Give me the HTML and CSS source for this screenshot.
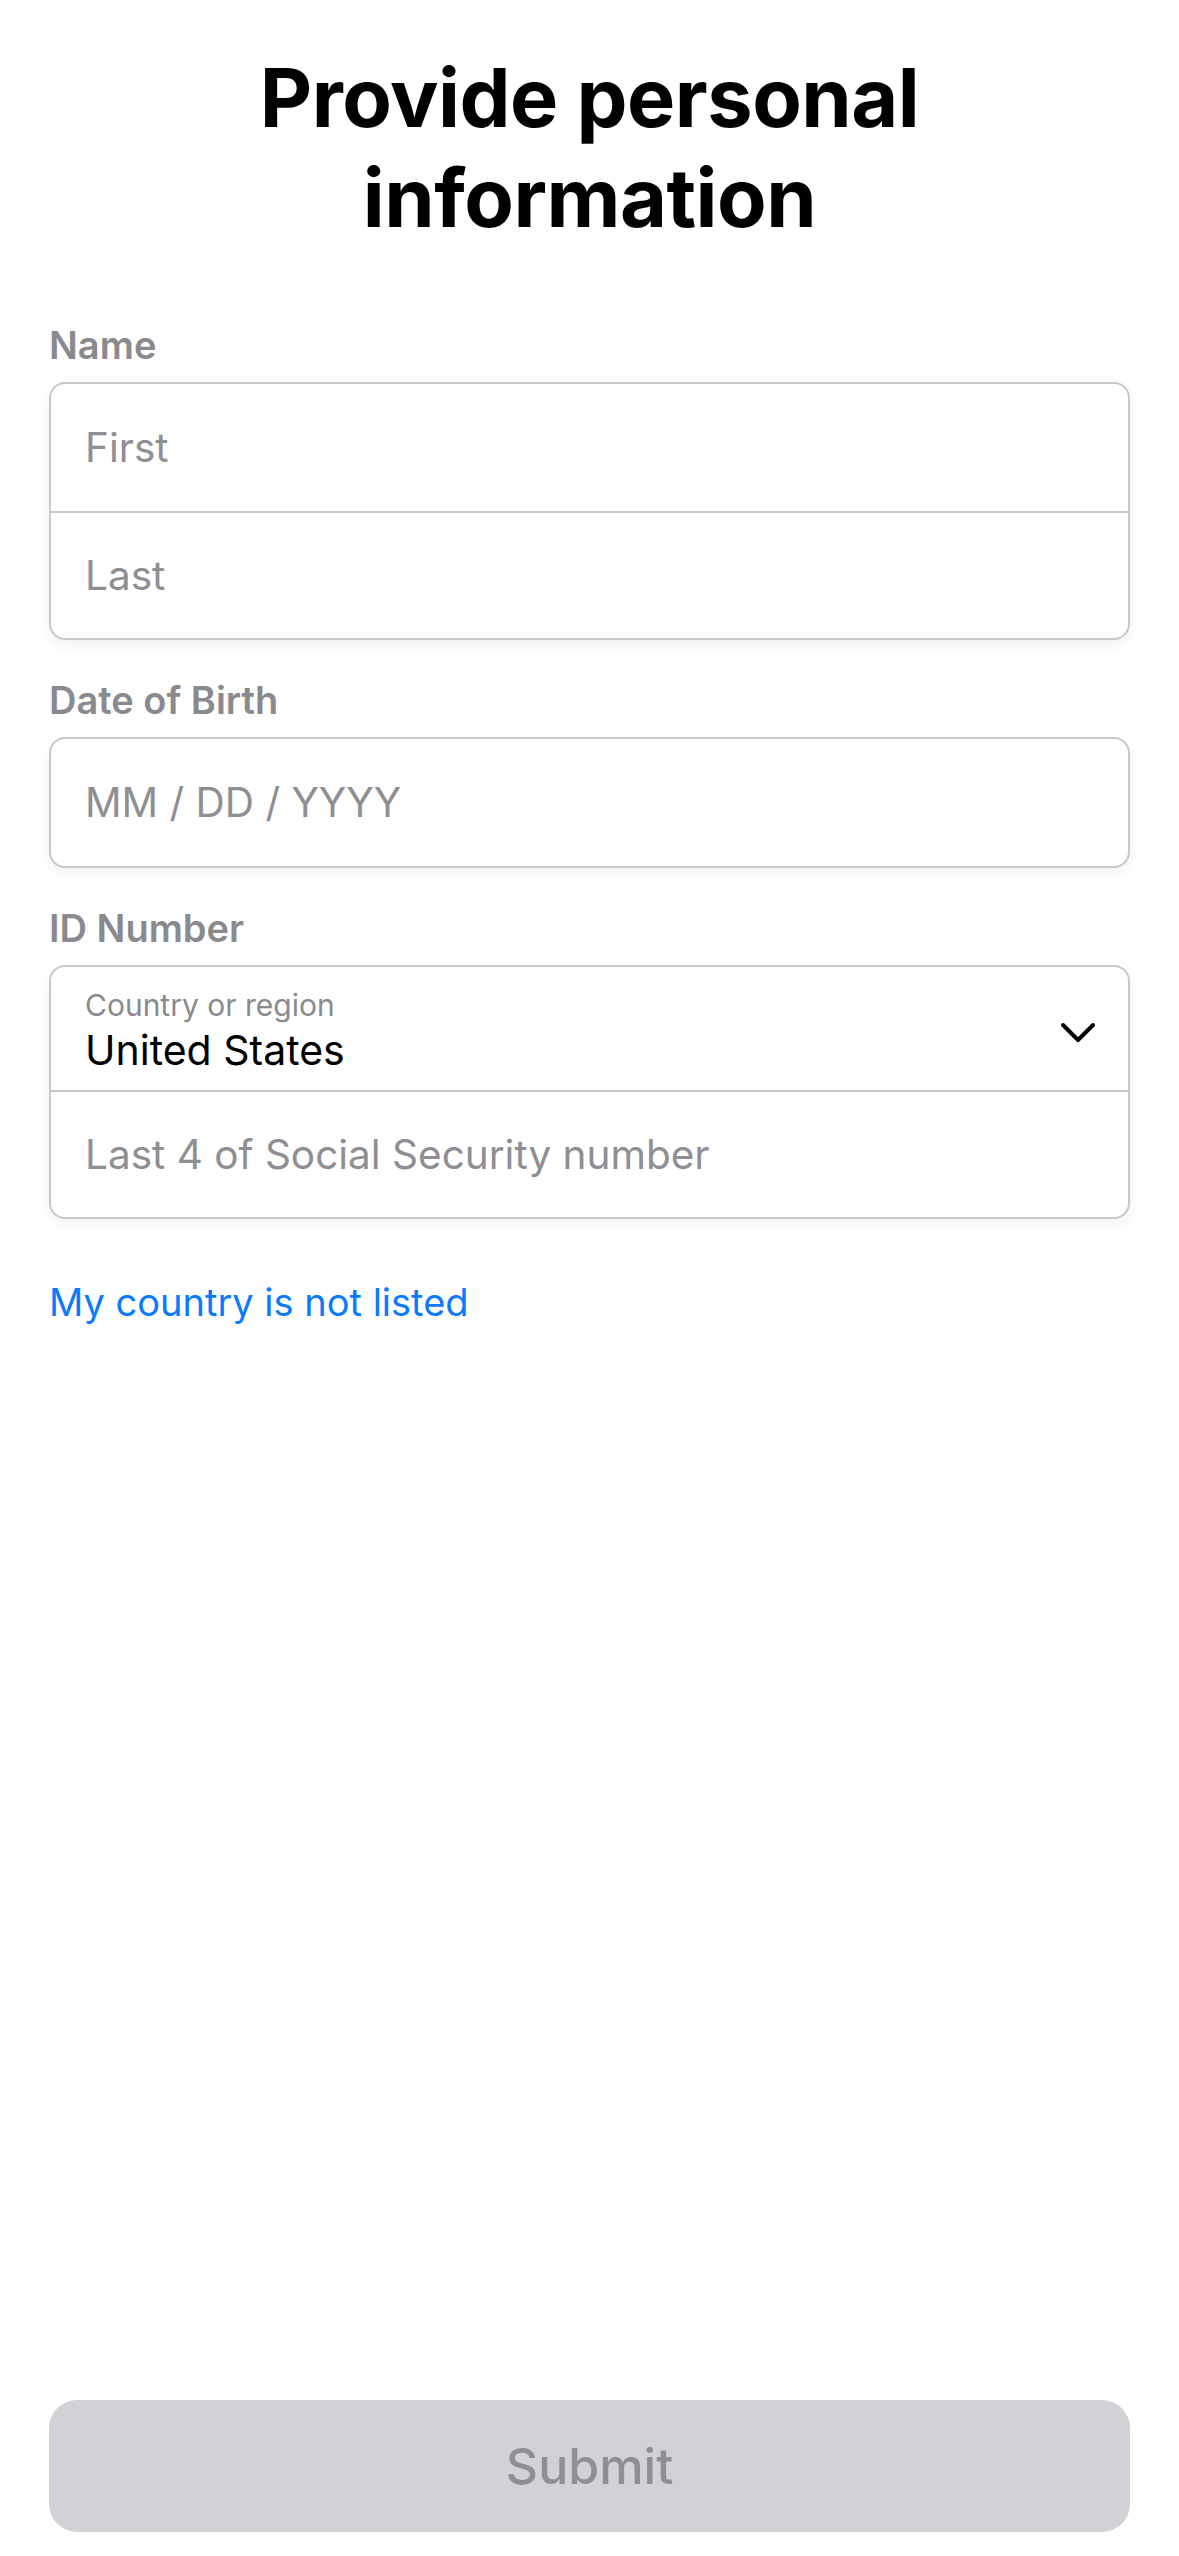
FILE: index.html
```html
<!DOCTYPE html>
<html lang="en">
<head>
<meta charset="utf-8">
<title>Provide personal information</title>
<link rel="stylesheet" href="styles.css">
</head>
<body>
<main class="page">
  <h1 class="title">Provide personal<br>information</h1>

  <section class="group">
    <div class="label">Name</div>
    <div class="box">
      <div class="row"><span class="placeholder">First</span></div>
      <div class="row"><span class="placeholder">Last</span></div>
    </div>
  </section>

  <section class="group">
    <div class="label">Date of Birth</div>
    <div class="box">
      <div class="row"><span class="placeholder">MM / DD / YYYY</span></div>
    </div>
  </section>

  <section class="group">
    <div class="label">ID Number</div>
    <div class="box">
      <div class="row row-select">
        <div class="select-text">
          <span class="select-caption">Country or region</span>
          <span class="select-value">United States</span>
        </div>
        <svg class="chevron" width="36" height="24" viewBox="0 0 36 24" aria-hidden="true">
          <polyline points="3,4 18,19 33,4" fill="none" stroke="#000" stroke-width="4" stroke-linecap="round" stroke-linejoin="round"/>
        </svg>
      </div>
      <div class="row row-ssn"><span class="placeholder">Last 4 of Social Security number</span></div>
    </div>
  </section>

  <a class="link" href="#">My country is not listed</a>

  <button class="submit" type="button">Submit</button>
</main>
</body>
</html>
```

FILE: styles.css
```css
* {
  box-sizing: border-box;
}

html, body {
  margin: 0;
  padding: 0;
  background: #ffffff;
}

body {
  font-family: "Inter", "Noto Sans", "Liberation Sans", sans-serif;
  color: #000;
}

.page {
  width: 1179px;
  min-height: 2556px;
  padding: 48px 49px 24px;
  display: flex;
  flex-direction: column;
}

.title {
  margin: 0;
  text-align: center;
  font-size: 81px;
  line-height: 100px;
  font-weight: 700;
  letter-spacing: -0.5px;
}

.group {
  display: flex;
  flex-direction: column;
  margin-top: 38px;
}

.group:first-of-type {
  margin-top: 75px;
}

.label {
  font-size: 38px;
  line-height: 44px;
  font-weight: 600;
  color: #8a8a8e;
  margin-bottom: 15px;
}

.box {
  border: 2px solid #c7c7cc;
  border-radius: 16px;
  background: #fff;
  box-shadow: 0 6px 14px rgba(0, 0, 0, 0.05);
  display: flex;
  flex-direction: column;
  overflow: hidden;
}

.row {
  height: 127px;
  padding: 0 34px;
  display: flex;
  align-items: center;
}

.row + .row {
  border-top: 2px solid #c7c7cc;
}

.placeholder {
  font-size: 40.5px;
  line-height: 48px;
  color: #8e8e93;
}

.row-select {
  height: 123px;
  align-items: flex-start;
  justify-content: space-between;
  padding-top: 20px;
}

.row-ssn {
  height: 127px;
}

.select-text {
  display: flex;
  flex-direction: column;
}

.select-caption {
  font-size: 30px;
  line-height: 36px;
  color: #8a8a8e;
}

.select-value {
  font-size: 41px;
  line-height: 50px;
  margin-top: 2px;
  color: #000;
}

.chevron {
  margin-top: 34px;
  margin-right: -2px;
}

.link {
  margin-top: 59px;
  align-self: flex-start;
  font-size: 38px;
  line-height: 48px;
  color: #0a7aff;
  text-decoration: none;
}

.submit {
  margin-top: auto;
  height: 132px;
  width: 100%;
  border: none;
  border-radius: 28px;
  background: #d1d1d6;
  color: #8e8e93;
  font-family: "Inter", "Noto Sans", "Liberation Sans", sans-serif;
  font-size: 50px;
  font-weight: 500;
  padding: 0;
}
```
